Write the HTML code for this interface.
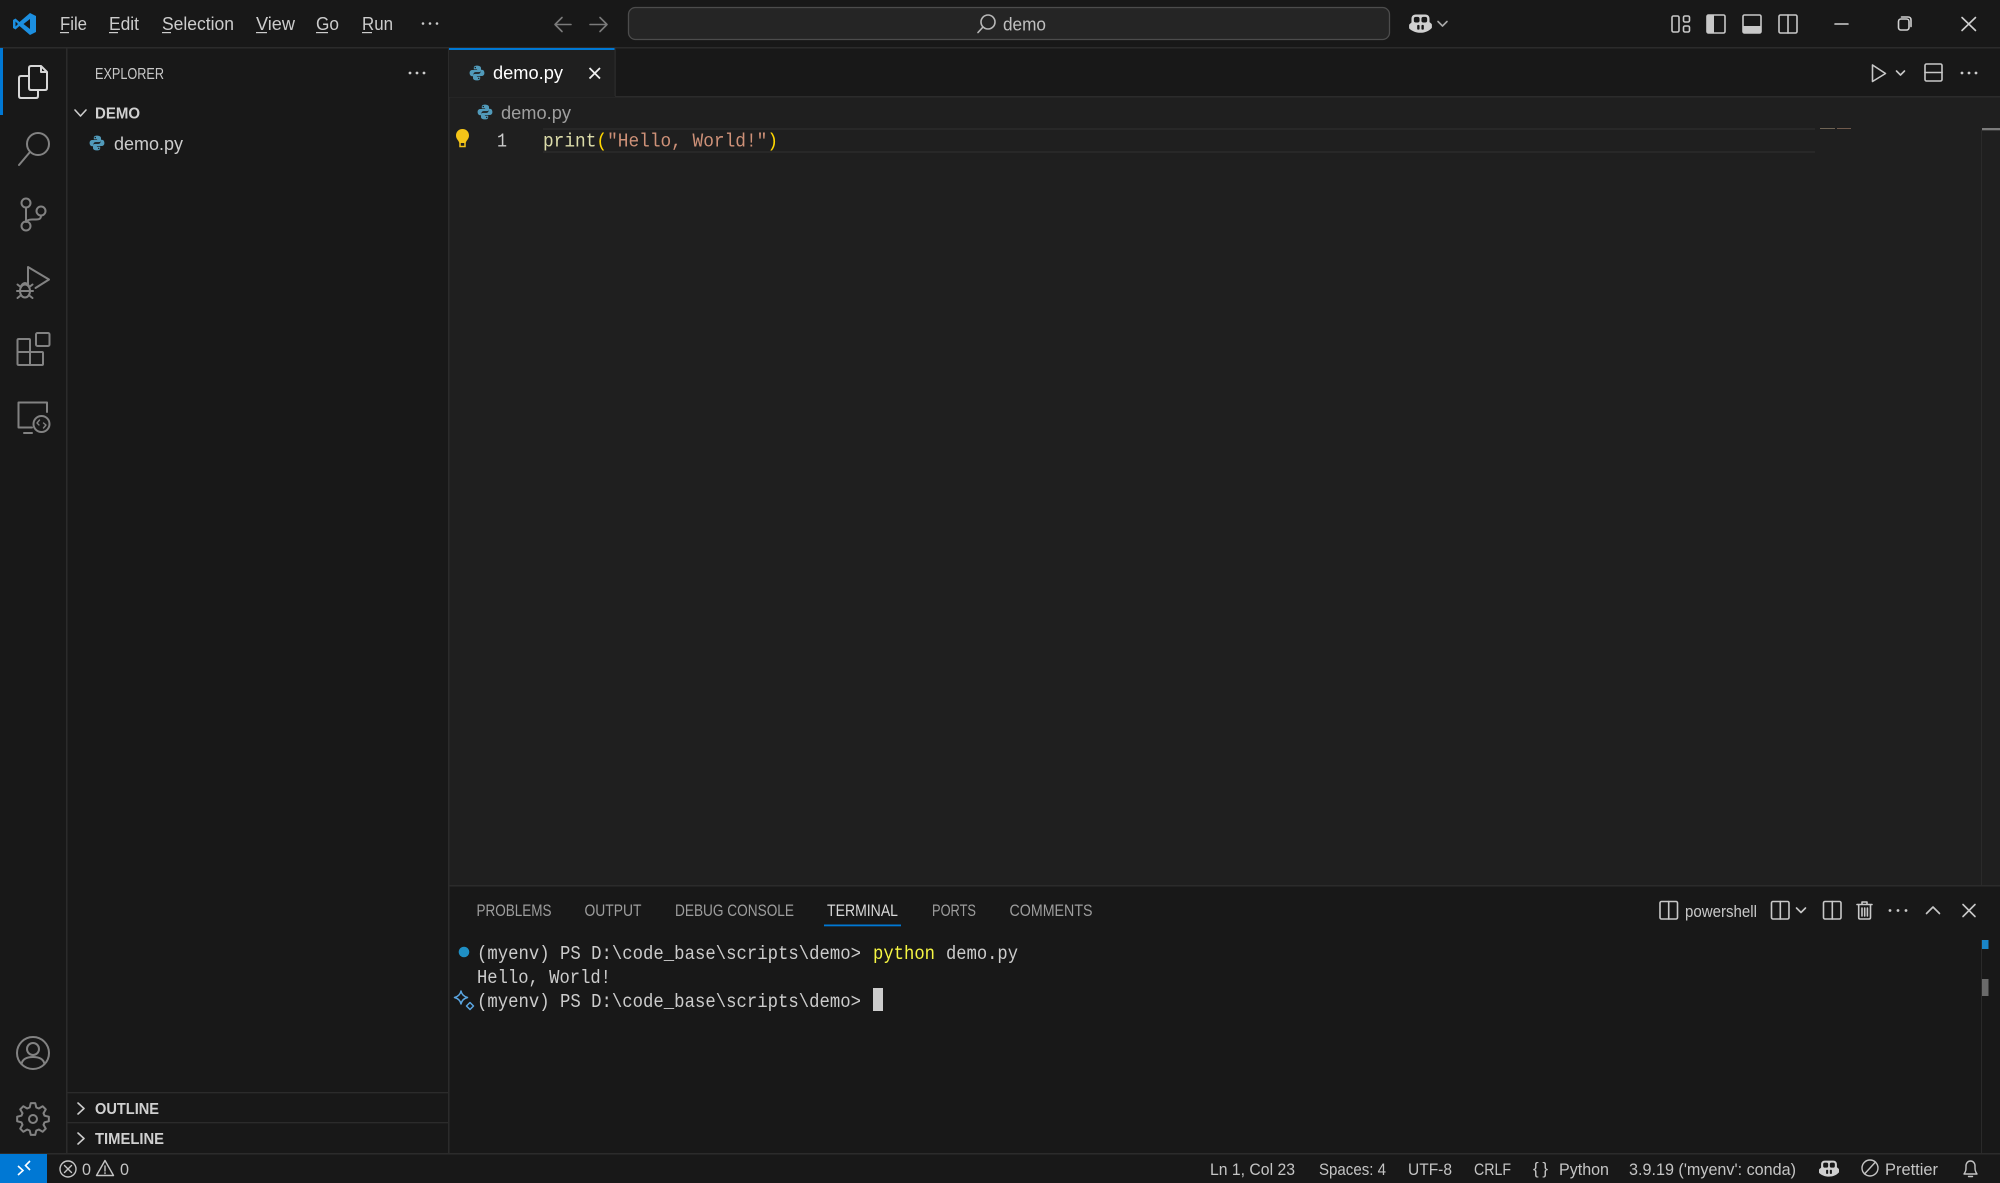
<!DOCTYPE html>
<html><head><meta charset="utf-8"><title>demo.py</title>
<style>
html,body{margin:0;padding:0;background:#181818;width:2000px;height:1183px;overflow:hidden}
svg{display:block}
text{font-family:"Liberation Sans",sans-serif;white-space:pre}
.m text,text.m{font-family:"Liberation Mono",monospace}
.i{fill:none;stroke:#cccccc;stroke-width:1.6;stroke-linecap:round;stroke-linejoin:round}
.a{fill:none;stroke:#828282;stroke-width:2;stroke-linecap:round;stroke-linejoin:round}
</style></head><body>
<svg xmlns="http://www.w3.org/2000/svg" width="2000" height="1183" viewBox="0 0 2000 1183">
<defs>
<symbol id="py" viewBox="0 0 16 16"><path fill="#519aba" d="M7.9 .6C5.3.6 4.8 1.7 4.8 2.9v1.5h3.3v.6H3.3C1.6 5 .6 6.2.6 8s1 3.2 2.5 3.2h1.3V9.4c0-1.3 1-2.3 2.4-2.3h3.3c1 0 1.9-.9 1.9-2V2.9C11.9 1.7 10.600.6 7.9.6z"/><path fill="#519aba" d="M8.100 15.400c2.600 0 3.100-1.100 3.100-2.300v-1.500H7.900V11h4.800c1.700 0 2.700-1.200 2.700-3s-1-3.200-2.500-3.200h-1.300v1.800c0 1.300-1 2.300-2.400 2.300H5.900c-1 0-1.900.9-1.900 2v2.200c0 1.200 1.300 2.300 4.100 2.300z"/><circle cx="6.300" cy="2.600" r=".7" fill="#181818"/><circle cx="9.700" cy="13.400" r=".7" fill="#181818"/></symbol>
<symbol id="cp" viewBox="0 0 24 20"><path fill="#d0d0d0" d="M7 0.500h10c3 0 4.500 2 4.500 4.500v3.500l1.800 1.500c.5.400.7 1 .7 1.500v2.500c0 .6-.2 1-.7 1.300C21 17.800 17 19.800 12 19.800S3 17.800.7 15.800C.2 15.500 0 15.100 0 14.500V12c0-.6.2-1.100.7-1.500l1.800-1.500V5C2.500 2.500 4 .5 7 .5z"/><rect x="5" y="3" width="6" height="6" rx="2" fill="#181818"/><rect x="13" y="3" width="6" height="6" rx="2" fill="#181818"/><rect x="8.500" y="11.500" width="2.500" height="5" rx="1" fill="#181818"/><rect x="13" y="11.500" width="2.500" height="5" rx="1" fill="#181818"/></symbol>
</defs>

<!-- base -->
<rect width="2000" height="1183" fill="#181818"/>
<rect x="449" y="97" width="1551" height="788" fill="#1f1f1f"/>
<rect y="47" width="2000" height="1.500" fill="#2b2b2b"/>
<rect x="66" y="48" width="1.500" height="1105" fill="#2b2b2b"/>
<rect x="448" y="48" width="1.500" height="1105" fill="#2b2b2b"/>
<rect x="449" y="96" width="1551" height="1.500" fill="#2b2b2b"/>
<rect x="449" y="885" width="1551" height="1.500" fill="#2b2b2b"/>
<rect y="1153" width="2000" height="1.500" fill="#2b2b2b"/>
<rect y="48" width="3" height="67" fill="#0078d4"/>

<!-- title bar -->
<path fill="#1c8fe0" fill-rule="evenodd" d="M30 13 36 16V32L30 35 19.500 26 15.500 29.500 13 28V20L15.500 18.500 19.500 22ZM30 19 23.500 24 30 29ZM15.500 21.500V26.500L18 24Z"/>
<g font-size="18" fill="#cccccc">
<text x="60" y="30" textLength="27" lengthAdjust="spacingAndGlyphs">File</text>
<text x="109" y="30" textLength="30" lengthAdjust="spacingAndGlyphs">Edit</text>
<text x="162" y="30" textLength="72" lengthAdjust="spacingAndGlyphs">Selection</text>
<text x="256" y="30" textLength="39" lengthAdjust="spacingAndGlyphs">View</text>
<text x="316" y="30" textLength="23" lengthAdjust="spacingAndGlyphs">Go</text>
<text x="362" y="30" textLength="31" lengthAdjust="spacingAndGlyphs">Run</text>
</g>
<g fill="#cccccc"><rect x="60" y="32" width="9" height="1.200"/><rect x="109" y="32" width="9" height="1.200"/><rect x="162" y="32" width="9" height="1.200"/><rect x="256" y="32" width="11" height="1.200"/><rect x="316" y="32" width="12" height="1.200"/><rect x="362" y="32" width="10" height="1.200"/></g>
<g fill="#cccccc"><circle cx="423" cy="23.500" r="1.300"/><circle cx="430" cy="23.500" r="1.300"/><circle cx="437" cy="23.500" r="1.300"/></g>
<g class="i" style="stroke:#7a7a7a"><path d="M571 24.500H555M562 17.500 555 24.500 562 31.500"/><path d="M590 24.500H607M600 17.500 607 24.500 600 31.500"/></g>
<rect x="628.500" y="7.500" width="761" height="32" rx="7" fill="#252525" stroke="#4c4c4c" stroke-width="1.300"/>
<g class="i" style="stroke:#b8b8b8"><circle cx="988" cy="22" r="7"/><path d="M983 27 978 32.500"/></g>
<text x="1003" y="30.500" font-size="18" fill="#c0c0c0" textLength="43" lengthAdjust="spacingAndGlyphs">demo</text>
<use href="#cp" x="1409" y="14" width="23" height="19"/>
<path class="i" d="M1438 21.500 1442.500 26 1447 21.500" style="stroke:#a8a8a8"/>
<g class="i" style="stroke:#c8c8c8">
<rect x="1672" y="16" width="7" height="16" rx="1.500"/><rect x="1683.500" y="16" width="6" height="6" rx="1.500"/><rect x="1683.500" y="26" width="6" height="6" rx="1.500"/>
<rect x="1707" y="15" width="18" height="18" rx="1.500"/>
<rect x="1743" y="15" width="18" height="18" rx="1.500"/>
<rect x="1779" y="15" width="18" height="18" rx="1.500"/><path d="M1788 15V33"/>
</g>
<rect x="1707" y="15" width="7" height="18" fill="#c8c8c8"/><rect x="1743" y="26" width="18" height="7" fill="#c8c8c8"/>
<g class="i" style="stroke:#d0d0d0">
<path d="M1835 24H1848"/>
<rect x="1898.500" y="19" width="10.500" height="11" rx="2.500"/><path d="M1901.500 17H1908C1910 17 1911 18 1911 20V26.500"/>
<path d="M1962 17.500 1975.500 30.500M1975.500 17.500 1962 30.500"/>
</g>

<!-- activity bar -->
<g fill="none" stroke="#d7d7d7" stroke-width="2" stroke-linejoin="round">
<path d="M29 76H21Q19 76 19 78V96Q19 98 21 98H36Q38 98 38 96V90"/>
<path d="M31 66H41L47 72V88Q47 90 45 90H31Q29 90 29 88V68Q29 66 31 66ZM41 66V72H47"/>
</g>
<g class="a">
<circle cx="38" cy="144" r="11"/><path d="M30 152 19 165"/>
<circle cx="26" cy="203" r="4.500"/><circle cx="41" cy="211" r="4.500"/><circle cx="26" cy="226" r="4.500"/><path d="M26 208V221M41 215.500C41 219 39 219.500 36 219.500H32C29 219.500 27 220 26 222"/>
<path d="M28 285V267L49 279.500 35.500 288"/>
<ellipse cx="25" cy="291" rx="5" ry="6.500"/><path d="M21 286Q25 280 29 286M20 291H17M33 291H30M20 296 17.500 298M30 296 32.500 298M20 286.500 17.500 284.500M30 286.500 32.500 284.500M20 291H30"/>
<rect x="36" y="333" width="13.500" height="13" rx="1.500"/><path d="M19 339H29Q30 339 30 340V352H42Q43 352 43 353V364Q43 365 42 365H19Q17.500 365 17.500 364V340Q17.500 339 19 339ZM17.500 352H30V365"/>
<path d="M32 427.500H18.500V402.500H47V412M24 433H32"/><circle cx="41.500" cy="424" r="8"/><path d="M39.500 420 37 423 39 425M43.500 423 46 425 43.500 428" stroke-width="1.400"/>
<circle cx="33" cy="1053" r="16"/><circle cx="33" cy="1049" r="6"/><path d="M21.500 1064C22.500 1059 26.500 1057 33 1057S43.500 1059 44.500 1064"/>
<g transform="translate(33 1119)"><path d="M11.540-3.310 15.840-2.230 15.840 2.230 11.540 3.310 10.500 5.820 12.780 9.630 9.630 12.780 5.820 10.500 3.310 11.540 2.230 15.840-2.230 15.840-3.310 11.540-5.820 10.500-9.630 12.780-12.780 9.630-10.500 5.820-11.540 3.310-15.840 2.230-15.840-2.230-11.540-3.310-10.500-5.820-12.780-9.630-9.630-12.780-5.820-10.500-3.310-11.540-2.230-15.840 2.230-15.840 3.310-11.540 5.820-10.500 9.630-12.780 12.780-9.630 10.500-5.820Z"/><circle r="4"/></g>
</g>

<!-- sidebar -->
<text x="95" y="79" font-size="16" fill="#c8c8c8" textLength="69" lengthAdjust="spacingAndGlyphs">EXPLORER</text>
<g fill="#cccccc"><circle cx="410" cy="73" r="1.400"/><circle cx="417" cy="73" r="1.400"/><circle cx="424" cy="73" r="1.400"/></g>
<path class="i" d="M75 110 80.500 116 86 110" />
<text x="95" y="118.500" font-size="16" font-weight="bold" fill="#d0d0d0" textLength="45" lengthAdjust="spacingAndGlyphs">DEMO</text>
<use href="#py" x="89" y="135" width="16" height="16"/>
<text x="114" y="150" font-size="18" fill="#cccccc" textLength="69" lengthAdjust="spacingAndGlyphs">demo.py</text>
<rect x="67" y="1092" width="381" height="1.300" fill="#2b2b2b"/>
<rect x="67" y="1122" width="381" height="1.300" fill="#2b2b2b"/>
<path class="i" d="M78 1103 84 1108.500 78 1114M78 1133 84 1138.500 78 1144"/>
<text x="95" y="1114" font-size="16" font-weight="bold" fill="#d0d0d0" textLength="64" lengthAdjust="spacingAndGlyphs">OUTLINE</text>
<text x="95" y="1144" font-size="16" font-weight="bold" fill="#d0d0d0" textLength="69" lengthAdjust="spacingAndGlyphs">TIMELINE</text>

<!-- editor tabs -->
<rect x="449" y="48" width="166" height="49" fill="#1f1f1f"/>
<rect x="449" y="48" width="166" height="2" fill="#0078d4"/>
<rect x="614.500" y="48" width="1.300" height="48" fill="#2b2b2b"/>
<use href="#py" x="469" y="65" width="16" height="16"/>
<text x="493" y="79" font-size="18" fill="#ffffff" textLength="70" lengthAdjust="spacingAndGlyphs">demo.py</text>
<path d="M589.500 68 600 78.500M600 68 589.500 78.500" fill="none" stroke="#f0f0f0" stroke-width="1.800"/>
<g class="i" style="stroke:#c8c8c8">
<path d="M1872.500 65V81.500L1885.500 73.500Z" />
<path d="M1896.500 71 1900.500 75 1904.500 71" />
<rect x="1925" y="64" width="17" height="17" rx="1.500"/><path d="M1925 72.500H1942"/>
</g>
<g fill="#cccccc"><circle cx="1962" cy="73" r="1.400"/><circle cx="1969" cy="73" r="1.400"/><circle cx="1976" cy="73" r="1.400"/></g>

<!-- breadcrumb & code -->
<use href="#py" x="477" y="104" width="16" height="16"/>
<text x="501" y="119" font-size="18" fill="#9f9f9f" textLength="70" lengthAdjust="spacingAndGlyphs">demo.py</text>
<rect x="543" y="128" width="1272" height="2" fill="#282828"/>
<rect x="543" y="151" width="1272" height="2" fill="#282828"/>
<path fill="#f5c518" d="M462.500 129C458.500 129 456 132 456 135.500C456 139 458.500 140 459.300 143H465.700C466.500 140 469 139 469 135.500C469 132 466.500 129 462.500 129Z"/>
<path fill="none" stroke="#f5c518" stroke-width="1.500" d="M460 143V146.500H465V143"/>
<text x="497" y="146.500" font-size="19" class="m" fill="#cccccc" textLength="10" lengthAdjust="spacingAndGlyphs">1</text>
<text x="543" y="146.500" font-size="19" class="m" textLength="235" lengthAdjust="spacingAndGlyphs"><tspan fill="#dcdcaa">print</tspan><tspan fill="#ffd700">(</tspan><tspan fill="#ce9178">"Hello, World!"</tspan><tspan fill="#ffd700">)</tspan></text>
<g><rect x="1820" y="128" width="15" height="1" fill="#6f6455"/><rect x="1837" y="128" width="14" height="1" fill="#705a4c"/></g>
<rect x="1982" y="128" width="18" height="2.300" fill="#7c7c7c"/>
<rect x="1981" y="130" width="1" height="755" fill="#2a2a2a"/>

<!-- panel -->
<g font-size="16.500" fill="#9d9d9d">
<text x="476.500" y="916" textLength="75" lengthAdjust="spacingAndGlyphs">PROBLEMS</text>
<text x="584.500" y="916" textLength="57" lengthAdjust="spacingAndGlyphs">OUTPUT</text>
<text x="675" y="916" textLength="119" lengthAdjust="spacingAndGlyphs">DEBUG CONSOLE</text>
<text x="827" y="916" fill="#d8d8d8" textLength="71" lengthAdjust="spacingAndGlyphs">TERMINAL</text>
<text x="932" y="916" textLength="44" lengthAdjust="spacingAndGlyphs">PORTS</text>
<text x="1009.500" y="916" textLength="83" lengthAdjust="spacingAndGlyphs">COMMENTS</text>
</g>
<rect x="824" y="924.500" width="77" height="1.800" fill="#0078d4"/>
<g class="i" style="stroke:#c8c8c8">
<rect x="1660" y="901.500" width="17.500" height="17.500" rx="1.500"/><path d="M1668.700 901.500V919"/>
<rect x="1771.500" y="901.500" width="17.500" height="17.500" rx="1.500"/><path d="M1780.300 901.500V919"/>
<path d="M1796.500 908 1801 912.500 1805.500 908"/>
<rect x="1823.500" y="901.500" width="17.500" height="17.500" rx="1.500"/><path d="M1832.300 901.500V919"/>
<path d="M1857 904.500H1872M1862 904V902H1867V904M1858.700 905V917.500Q1858.700 919 1860 919H1869Q1870.500 919 1870.500 917.500V905M1862 908V916M1864.700 908V916M1867.400 908V916"/>
<path d="M1926.500 913.500 1933 907 1939.500 913.500"/>
<path d="M1963 904.500 1975 916.500M1975 904.500 1963 916.500"/>
</g>
<text x="1685" y="917" font-size="16.500" fill="#c8c8c8" textLength="72" lengthAdjust="spacingAndGlyphs">powershell</text>
<g fill="#cccccc"><circle cx="1890" cy="910.500" r="1.400"/><circle cx="1898" cy="910.500" r="1.400"/><circle cx="1906" cy="910.500" r="1.400"/></g>
<rect x="1981" y="940" width="1" height="213" fill="#2a2a2a"/>
<rect x="1982" y="940" width="6.500" height="9" fill="#1a85c8"/>
<rect x="1982" y="979" width="6.500" height="17" fill="#6a6a6a"/>

<!-- terminal -->
<circle cx="464" cy="952" r="5.300" fill="#1f8fc4"/>
<g fill="none" stroke="#5aa5e0" stroke-width="1.500" stroke-linejoin="round"><path d="M461 991Q462 996 467.500 997.500Q462 999 461 1004Q460 999 454.500 997.500Q460 996 461 991Z"/><path d="M470 1002.500 473.500 1006 470 1009.500 466.500 1006Z"/></g>
<g class="m" font-size="19" fill="#cccccc">
<text x="477" y="959" textLength="384" lengthAdjust="spacingAndGlyphs">(myenv) PS D:\code_base\scripts\demo&gt;</text>
<text x="873" y="959" fill="#f5f543" textLength="62" lengthAdjust="spacingAndGlyphs">python</text>
<text x="946" y="959" textLength="72" lengthAdjust="spacingAndGlyphs">demo.py</text>
<text x="477" y="983" textLength="134" lengthAdjust="spacingAndGlyphs">Hello, World!</text>
<text x="477" y="1007" textLength="384" lengthAdjust="spacingAndGlyphs">(myenv) PS D:\code_base\scripts\demo&gt;</text>
</g>
<rect x="873" y="988" width="10" height="23" fill="#cccccc"/>

<!-- status bar -->
<rect y="1154" width="47" height="29" fill="#0078d4"/>
<path d="M18 1166 23 1170.500 18 1175M30 1161 25.500 1165.500 30 1170" fill="none" stroke="#fff" stroke-width="1.600"/>
<g class="i" style="stroke:#c4c4c4;stroke-width:1.400">
<circle cx="68" cy="1169" r="8"/><path d="M64.500 1165.500 71.500 1172.500M71.500 1165.500 64.500 1172.500"/>
<path d="M105 1160.500 113.500 1175.500H96.500ZM105 1166V1171M105 1172.800V1173.500"/>
</g>
<g font-size="17" fill="#c4c4c4">
<text x="82" y="1175" textLength="9" lengthAdjust="spacingAndGlyphs">0</text>
<text x="120" y="1175" textLength="9" lengthAdjust="spacingAndGlyphs">0</text>
<text x="1210" y="1175" textLength="85" lengthAdjust="spacingAndGlyphs">Ln 1, Col 23</text>
<text x="1319" y="1175" textLength="67" lengthAdjust="spacingAndGlyphs">Spaces: 4</text>
<text x="1408" y="1175" textLength="44" lengthAdjust="spacingAndGlyphs">UTF-8</text>
<text x="1474" y="1175" textLength="37" lengthAdjust="spacingAndGlyphs">CRLF</text>
<text x="1533" y="1174" textLength="15" lengthAdjust="spacing">{}</text>
<text x="1559" y="1175" textLength="50" lengthAdjust="spacingAndGlyphs">Python</text>
<text x="1629" y="1175" textLength="167" lengthAdjust="spacingAndGlyphs">3.9.19 ('myenv': conda)</text>
<text x="1885" y="1175" textLength="53" lengthAdjust="spacingAndGlyphs">Prettier</text>
</g>
<use href="#cp" x="1819" y="1160" width="20" height="17"/>
<g class="i" style="stroke:#c4c4c4;stroke-width:1.400">
<circle cx="1870" cy="1168" r="8"/><path d="M1864.500 1174 1875.500 1162"/>
<path d="M1964 1174C1966 1171 1966 1170 1966 1166C1966 1163 1968 1161 1970.500 1161S1975 1163 1975 1166C1975 1170 1975 1171 1977 1174ZM1968.500 1176.500H1972.500"/>
</g>
</svg>
</body></html>
